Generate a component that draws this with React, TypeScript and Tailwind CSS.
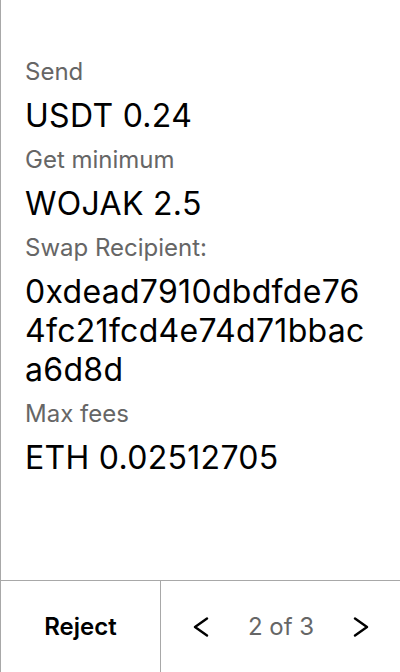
const rows = [
  { label: "Send", value: ["USDT 0.24"] },
  { label: "Get minimum", value: ["WOJAK 2.5"] },
  { label: "Swap Recipient:", value: ["0xdead7910dbdfde76", "4fc21fcd4e74d71bbac", "a6d8d"] },
  { label: "Max fees", value: ["ETH 0.02512705"] },
];

function Chevron({ dir }: { dir: "left" | "right" }) {
  return (
    <svg width="16" height="20" viewBox="0 0 16 20" fill="none" stroke="black" strokeWidth="2.4" strokeLinecap="round" strokeLinejoin="round">
      {dir === "left" ? <polyline points="14,1.5 2,10 14,18.5" /> : <polyline points="2,1.5 14,10 2,18.5" />}
    </svg>
  );
}

export default function App() {
  return (
    <div className="flex h-[672px] w-[400px] flex-col border-l border-[#a8a8a8] bg-white font-['Inter',sans-serif]">
      <div className="flex-1 pl-[24px] pt-[47px]">
        {rows.map((r) => (
          <div key={r.label}>
            <div className="text-[24px] leading-[49px] text-[#666666]">{r.label}</div>
            <div className="text-[32px] leading-[39px] tracking-[0.3px] text-black">
              {r.value.map((line) => (
                <div key={line}>{line}</div>
              ))}
            </div>
          </div>
        ))}
      </div>
      <div className="flex h-[92px] border-t border-[#a8a8a8]">
        <button className="w-[160px] border-r border-[#a8a8a8] text-[24px] font-semibold text-black">
          Reject
        </button>
        <div className="flex flex-1 items-center justify-between pl-[32px] pr-[31px]">
          <Chevron dir="left" />
          <span className="text-[24px] text-[#666666]">2 of 3</span>
          <Chevron dir="right" />
        </div>
      </div>
    </div>
  );
}
